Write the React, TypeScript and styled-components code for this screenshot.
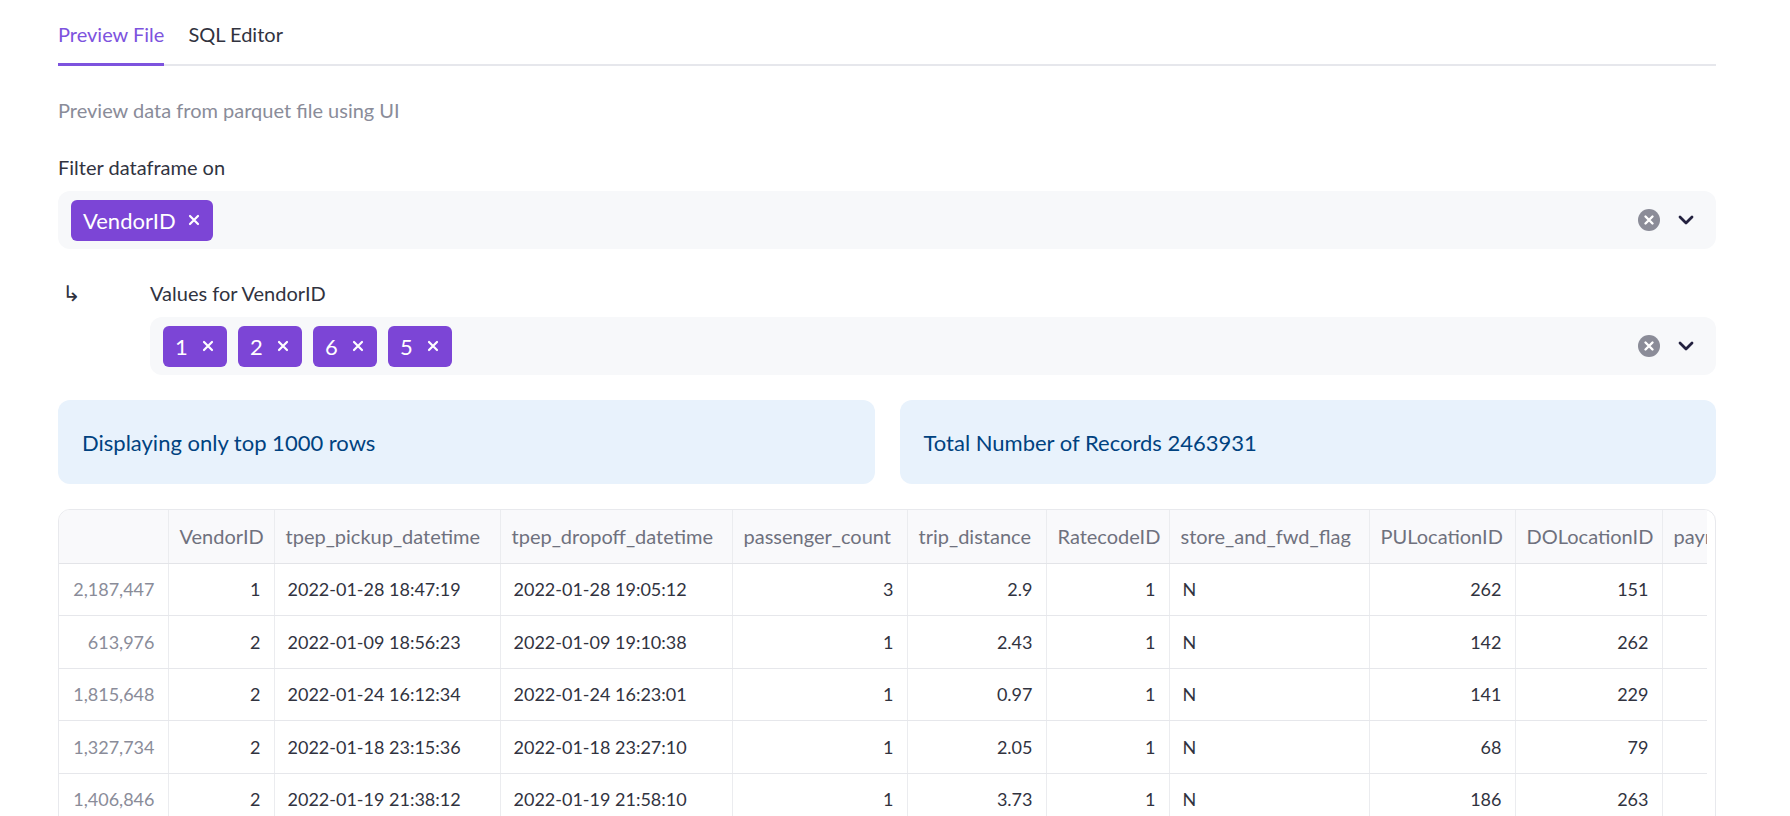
import React from 'react';
import styled, { createGlobalStyle } from 'styled-components';

const GlobalStyle = createGlobalStyle`
  html, body {
    margin: 0;
    padding: 0;
    background: #fff;
  }
  body {
    font-family: Lato, "Liberation Sans", sans-serif;
    color: #31333f;
  }
  * { box-sizing: border-box; }
`;

type Align = 'left' | 'right';

type Column = {
  key: string;
  label: string;
  width: number;
  align: Align;
};

const columns: Column[] = [
  { key: 'idx', label: '', width: 109, align: 'right' },
  { key: 'vendor', label: 'VendorID', width: 106, align: 'right' },
  { key: 'pickup', label: 'tpep_pickup_datetime', width: 226, align: 'left' },
  { key: 'dropoff', label: 'tpep_dropoff_datetime', width: 232, align: 'left' },
  { key: 'passengers', label: 'passenger_count', width: 175, align: 'right' },
  { key: 'distance', label: 'trip_distance', width: 139, align: 'right' },
  { key: 'rate', label: 'RatecodeID', width: 123, align: 'right' },
  { key: 'flag', label: 'store_and_fwd_flag', width: 200, align: 'left' },
  { key: 'pu', label: 'PULocationID', width: 146, align: 'right' },
  { key: 'do', label: 'DOLocationID', width: 147, align: 'right' },
  { key: 'payment', label: 'payment_type', width: 150, align: 'right' },
];

const rows: (string | number)[][] = [
  ['2,187,447', 1, '2022-01-28 18:47:19', '2022-01-28 19:05:12', 3, 2.9, 1, 'N', 262, 151, 1],
  ['613,976', 2, '2022-01-09 18:56:23', '2022-01-09 19:10:38', 1, 2.43, 1, 'N', 142, 262, 1],
  ['1,815,648', 2, '2022-01-24 16:12:34', '2022-01-24 16:23:01', 1, 0.97, 1, 'N', 141, 229, 1],
  ['1,327,734', 2, '2022-01-18 23:15:36', '2022-01-18 23:27:10', 1, 2.05, 1, 'N', 68, 79, 1],
  ['1,406,846', 2, '2022-01-19 21:38:12', '2022-01-19 21:58:10', 1, 3.73, 1, 'N', 186, 263, 1],
];

const Page = styled.main`
  width: 1790px;
  padding: 18px 74px 0 58px;
`;

const TabList = styled.div`
  display: flex;
  gap: 24px;
  border-bottom: 2px solid #e6e7ec;
`;

const Tab = styled.div<{ $active?: boolean }>`
  position: relative;
  font-size: 20px;
  line-height: 32px;
  padding-bottom: 14px;
  color: ${({ $active }) => ($active ? '#7d53de' : '#31333f')};

  &::after {
    content: '';
    position: absolute;
    left: 0;
    right: 0;
    bottom: -2px;
    height: 3px;
    background: ${({ $active }) => ($active ? '#7d53de' : 'transparent')};
  }
`;

const Caption = styled.p`
  margin: 29px 0 0;
  font-size: 20px;
  line-height: 30px;
  color: #8a8c99;
`;

const Label = styled.div<{ $top: number }>`
  margin-top: ${({ $top }) => $top}px;
  margin-bottom: 9px;
  font-size: 20px;
  line-height: 30px;
`;

const SelectBox = styled.div`
  display: flex;
  align-items: center;
  height: 58px;
  padding: 0 22px 0 13px;
  background: #f7f8fa;
  border-radius: 12px;
`;

const Tags = styled.div`
  flex: 1;
  display: flex;
  gap: 11px;
`;

const Tag = styled.span`
  display: inline-flex;
  align-items: center;
  justify-content: space-between;
  gap: 12px;
  min-width: 64px;
  height: 41px;
  padding: 0 13px 0 12px;
  background: #7c45d6;
  color: #fff;
  border-radius: 6px;
  font-size: 22px;
`;

const Controls = styled.div`
  display: flex;
  align-items: center;
  gap: 18px;
`;

const SubFilter = styled.div`
  display: grid;
  grid-template-columns: 92px 1fr;
`;

const Arrow = styled.div`
  margin-top: 30px;
  padding-left: 4px;
  font-family: "DejaVu Sans", sans-serif;
  font-size: 22px;
  line-height: 30px;
  color: #31333f;
`;

const InfoRow = styled.div`
  display: grid;
  grid-template-columns: 1fr 1fr;
  gap: 25px;
  margin-top: 25px;
`;

const InfoBox = styled.div`
  display: flex;
  align-items: center;
  height: 84px;
  padding: 0 24px;
  background: #e8f2fc;
  border-radius: 12px;
  color: #004280;
  font-size: 22px;
`;

const TableWrap = styled.div`
  margin-top: 25px;
  border: 1px solid #e8e9ed;
  border-radius: 12px 12px 0 0;
  overflow: hidden;
`;

const TableClip = styled.div`
  margin-right: 8px;
  overflow: hidden;
`;

const Table = styled.table`
  border-collapse: collapse;
  table-layout: fixed;
  width: ${columns.reduce((s, c) => s + c.width, 0)}px;
`;

const Th = styled.th`
  height: 53px;
  padding: 0 11px;
  background: #f9f9fb;
  color: #6f717e;
  font-weight: 400;
  font-size: 20px;
  text-align: left;
  white-space: nowrap;
  overflow: hidden;
  border-right: 1px solid #ebecef;
  border-bottom: 1px solid #e3e4e8;
`;

const Td = styled.td<{ $align: Align; $muted?: boolean }>`
  height: 52.5px;
  padding: 0 13px;
  font-size: 18px;
  white-space: nowrap;
  overflow: hidden;
  text-align: ${({ $align }) => $align};
  color: ${({ $muted }) => ($muted ? '#8a8c99' : '#31333f')};
  border-right: 1px solid #ebecef;
  border-bottom: 1px solid #e6e7eb;
`;

const CloseX = () => (
  <svg width="12" height="12" viewBox="0 0 12 12">
    <path d="M2 2 L10 10 M10 2 L2 10" stroke="#fff" strokeWidth="2.2" strokeLinecap="round" />
  </svg>
);

const ClearIcon = () => (
  <svg width="22" height="22" viewBox="0 0 22 22">
    <circle cx="11" cy="11" r="11" fill="#8b8c98" />
    <path d="M7.5 7.5 L14.5 14.5 M14.5 7.5 L7.5 14.5" stroke="#fff" strokeWidth="2.4" strokeLinecap="round" />
  </svg>
);

const Chevron = () => (
  <svg width="16" height="10" viewBox="0 0 16 10">
    <path d="M2 2 L8 8 L14 2" fill="none" stroke="#23213f" strokeWidth="2.8" strokeLinecap="round" strokeLinejoin="round" />
  </svg>
);

const MultiSelect = ({ values }: { values: string[] }) => (
  <SelectBox>
    <Tags>
      {values.map((v) => (
        <Tag key={v}>
          {v}
          <CloseX />
        </Tag>
      ))}
    </Tags>
    <Controls>
      <ClearIcon />
      <Chevron />
    </Controls>
  </SelectBox>
);

export default function App() {
  return (
    <>
      <GlobalStyle />
      <Page>
        <TabList>
          <Tab $active>Preview File</Tab>
          <Tab>SQL Editor</Tab>
        </TabList>

        <Caption>Preview data from parquet file using UI</Caption>

        <Label $top={27}>Filter dataframe on</Label>
        <MultiSelect values={['VendorID']} />

        <SubFilter>
          <Arrow>↳</Arrow>
          <div>
            <Label $top={29}>Values for VendorID</Label>
            <MultiSelect values={['1', '2', '6', '5']} />
          </div>
        </SubFilter>

        <InfoRow>
          <InfoBox>Displaying only top 1000 rows</InfoBox>
          <InfoBox>Total Number of Records 2463931</InfoBox>
        </InfoRow>

        <TableWrap>
          <TableClip>
            <Table>
              <colgroup>
                {columns.map((c) => (
                  <col key={c.key} style={{ width: c.width }} />
                ))}
              </colgroup>
              <thead>
                <tr>
                  {columns.map((c) => (
                    <Th key={c.key}>{c.label}</Th>
                  ))}
                </tr>
              </thead>
              <tbody>
                {rows.map((r, i) => (
                  <tr key={i}>
                    {r.map((cell, j) => (
                      <Td key={columns[j].key} $align={columns[j].align} $muted={j === 0}>
                        {cell}
                      </Td>
                    ))}
                  </tr>
                ))}
              </tbody>
            </Table>
          </TableClip>
        </TableWrap>
      </Page>
    </>
  );
}
